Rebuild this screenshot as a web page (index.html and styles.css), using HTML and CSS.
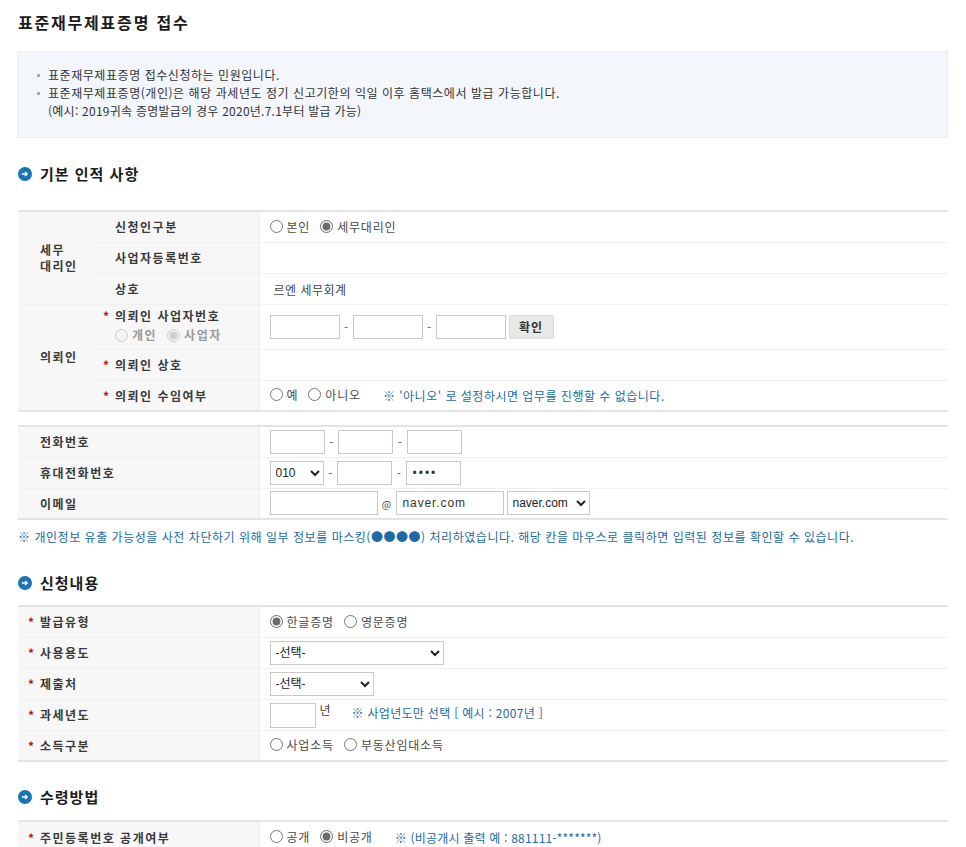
FILE: index.html
```html
<!DOCTYPE html>
<html lang="ko">
<head>
<meta charset="utf-8">
<title>표준재무제표증명 접수</title>
<link rel="stylesheet" href="styles.css">
</head>
<body>
<main class="page">
  <h1 class="title">표준재무제표증명 접수</h1>
  <div class="notice">
    <p class="bullet">표준재무제표증명 접수신청하는 민원입니다.</p>
    <p class="bullet">표준재무제표증명(개인)은 해당 과세년도 정기 신고기한의 익일 이후 홈택스에서 발급 가능합니다.</p>
    <p class="sub">(예시: 2019귀속 증명발급의 경우 2020년.7.1부터 발급 가능)</p>
  </div>

  <h2 class="section first"><svg class="ico" viewBox="0 0 14 14"><circle cx="7" cy="7" r="7" fill="#1a75b5"/><path d="M3.8 7h5.2M7 4.9 9.2 7 7 9.1" fill="none" stroke="#fff" stroke-width="1.4"/></svg>기본 인적 사항</h2>
  <table class="form t1">
    <colgroup><col class="c-group"><col class="c-label"><col></colgroup>
    <tr>
      <th rowspan="3" class="group">세무<br>대리인</th>
      <th class="lab up">신청인구분</th>
      <td><label class="opt"><input type="radio" name="a">본인</label><label class="opt"><input type="radio" name="a" checked>세무대리인</label></td>
    </tr>
    <tr><th class="lab up">사업자등록번호</th><td></td></tr>
    <tr><th class="lab up">상호</th><td class="down"><span class="value">르엔 세무회계</span></td></tr>
    <tr class="split">
      <th rowspan="3" class="group">의뢰인</th>
      <th class="lab tall"><span class="req">*</span>의뢰인 사업자번호
        <div class="kind"><label class="opt dis"><input type="radio" name="k" disabled>개인</label><label class="opt dis"><input type="radio" name="k" checked disabled>사업자</label></div>
      </th>
      <td class="biz"><input class="in w70" type="text"><span class="dash">-</span><input class="in w70" type="text"><span class="dash">-</span><input class="in w70" type="text"><button class="btn" type="button">확인</button></td>
    </tr>
    <tr><th class="lab"><span class="req">*</span>의뢰인 상호</th><td></td></tr>
    <tr><th class="lab"><span class="req">*</span>의뢰인 수임여부</th><td><label class="opt"><input type="radio" name="s">예</label><label class="opt"><input type="radio" name="s">아니오</label><span class="hint h1">※ '아니오' 로 설정하시면 업무를 진행할 수 없습니다.</span></td></tr>
  </table>

  <table class="form t2">
    <colgroup><col class="c-wide"><col></colgroup>
    <tr><th class="lab2">전화번호</th><td><input class="in w55" type="text"><span class="dash sm">-</span><input class="in w55" type="text"><span class="dash sm">-</span><input class="in w55" type="text"></td></tr>
    <tr><th class="lab2">휴대전화번호</th><td><select class="sel w54"><option>010</option></select><span class="dash sm">-</span><input class="in w55" type="text"><span class="dash sm">-</span><input class="in w55 mask" type="password" value="1234"></td></tr>
    <tr><th class="lab2">이메일</th><td><input class="in w108" type="text"><span class="at">@</span><input class="in w108 mail" type="text" value="naver.com"><select class="sel w83"><option>naver.com</option></select></td></tr>
  </table>
  <p class="hint mask-note">※ 개인정보 유출 가능성을 사전 차단하기 위해 일부 정보를 마스킹(●●●●) 처리하였습니다. 해당 칸을 마우스로 클릭하면 입력된 정보를 확인할 수 있습니다.</p>

  <h2 class="section s2"><svg class="ico" viewBox="0 0 14 14"><circle cx="7" cy="7" r="7" fill="#1a75b5"/><path d="M3.8 7h5.2M7 4.9 9.2 7 7 9.1" fill="none" stroke="#fff" stroke-width="1.4"/></svg>신청내용</h2>
  <table class="form t3">
    <colgroup><col class="c-wide"><col></colgroup>
    <tr><th class="lab3"><span class="req">*</span>발급유형</th><td><label class="opt"><input type="radio" name="t" checked>한글증명</label><label class="opt"><input type="radio" name="t">영문증명</label></td></tr>
    <tr><th class="lab3"><span class="req">*</span>사용용도</th><td><select class="sel w174"><option>-선택-</option></select></td></tr>
    <tr><th class="lab3"><span class="req">*</span>제출처</th><td><select class="sel w104"><option>-선택-</option></select></td></tr>
    <tr><th class="lab3"><span class="req">*</span>과세년도</th><td><input class="in w45" type="text"><span class="unit">년</span><span class="hint h2">※ 사업년도만 선택 [ 예시 : 2007년 ]</span></td></tr>
    <tr><th class="lab3"><span class="req">*</span>소득구분</th><td><label class="opt"><input type="radio" name="i">사업소득</label><label class="opt"><input type="radio" name="i">부동산임대소득</label></td></tr>
  </table>

  <h2 class="section s3"><svg class="ico" viewBox="0 0 14 14"><circle cx="7" cy="7" r="7" fill="#1a75b5"/><path d="M3.8 7h5.2M7 4.9 9.2 7 7 9.1" fill="none" stroke="#fff" stroke-width="1.4"/></svg>수령방법</h2>
  <table class="form t4">
    <colgroup><col class="c-wide"><col></colgroup>
    <tr><th class="lab3"><span class="req">*</span>주민등록번호 공개여부</th><td><label class="opt"><input type="radio" name="r">공개</label><label class="opt"><input type="radio" name="r" checked>비공개</label><span class="hint h3">※ (비공개시 출력 예 : 881111-*******)</span></td></tr>
  </table>
</main>
</body>
</html>
```
FILE: styles.css
```css
html, body {
  margin: 0;
  height: 847px;
  overflow: hidden;
  background: #fff;
}
body, input, select, button, table {
  font-family: "Noto Sans CJK KR", "Noto Sans", sans-serif;
  font-size: 12px;
  color: #444;
}
.page {
  padding: 0 18px 0 18px;
}
.title {
  margin: 0;
  padding-top: 12px;
  height: 39px;
  box-sizing: border-box;
  font-size: 16px;
  line-height: 20px;
  font-weight: 700;
  color: #1c1c1c;
  letter-spacing: 1.8px;
}
.notice {
  box-sizing: border-box;
  height: 87px;
  margin: 12px 0 0 -1px;
  padding: 14px 0 0 30px;
  background: #f3f6fb;
  border: 1px solid #e8edf3;
}
.notice p {
  margin: 0;
  line-height: 18px;
  font-size: 12px;
  color: #333;
  letter-spacing: 0.55px;
}
.bullet {
  position: relative;
}
.bullet::before {
  content: "";
  position: absolute;
  left: -11px;
  top: 8px;
  width: 3px;
  height: 3px;
  background: #aaa;
}
.notice .sub {
  letter-spacing: 0.25px;
}
.section {
  display: flex;
  align-items: center;
  gap: 8px;
  margin: 0;
  font-size: 15px;
  line-height: 20px;
  font-weight: 700;
  color: #1c1c1c;
  letter-spacing: 1px;
}
.ico {
  width: 14px;
  height: 14px;
  flex: none;
}
.first { margin-top: 26px; height: 20px; }
.s2 { margin-top: 26px; height: 20px; }
.s3 { margin-top: 25px; height: 20px; }
.form {
  width: 930px;
  table-layout: fixed;
  border-collapse: collapse;
  border-top: 2px solid #e4e4e4;
  border-bottom: 2px solid #e4e4e4;
}
.t1 { margin-top: 26px; }
.t2 { margin-top: 14px; }
.t3 { margin-top: 12px; }
.t4 { margin-top: 13px; border-bottom: 0; }
.c-group { width: 73px; }
.c-label { width: 168px; }
.c-wide { width: 241px; }
.form tr { height: 31px; }
.form th {
  padding: 0;
  background: #f7f7f7;
  text-align: left;
  font-weight: 700;
  color: #3a3a3a;
  letter-spacing: 1.5px;
  border-bottom: 1px solid #f0f0f0;
  border-right: 1px solid #eee;
}
.form td {
  padding: 0 0 0 10px;
  border-bottom: 1px solid #f0f0f0;
  white-space: nowrap;
}
.form tr:last-child th,
.form tr:last-child td { border-bottom: 0; }
.form .group {
  padding-left: 22px;
  line-height: 16px;
  border-right: 0;
  border-bottom: 0;
}
.split .group { border-top: 1px solid #f0f0f0; }
.lab { padding-left: 24px !important; position: relative; }
.lab.up { padding-bottom: 1px; }
.down { padding-top: 2px !important; }
.lab2 { padding-left: 22px !important; }
.lab3 { padding-left: 10px !important; }
.tall { height: 44px; line-height: 16px; }
.req {
  display: inline-block;
  width: 12px;
  margin-left: 0;
  color: #b5141a;
  font-weight: 700;
  letter-spacing: 0;
}
.t1 .req { margin-left: -12px; }
.kind { padding: 3px 0 0 0; }
.opt {
  display: inline-flex;
  align-items: center;
  margin-right: 10px;
  color: #4a4a4a;
  letter-spacing: 0.8px;
}
.opt input {
  width: 13px;
  height: 13px;
  margin: 0 4px 0 0;
  accent-color: #6a6a6a;
}
.dis { color: #999; letter-spacing: 1.5px; }
.value { margin-left: 4px; letter-spacing: 0.5px; }
.in {
  box-sizing: border-box;
  height: 24px;
  padding: 0 5px;
  border: 1px solid #c8c8c8;
  background: #fff;
  vertical-align: middle;
  font-family: "Liberation Sans", sans-serif;
  font-size: 12px;
  color: #333;
  outline: 0;
}
.w70 { width: 70px; }
.w55 { width: 55px; }
.w45 { width: 46px; height: 25px; }
.w108 { width: 108px; }
.mail { letter-spacing: 0.9px; padding-left: 6px; }
.mask { letter-spacing: 2px; padding-left: 6px; }
.dash {
  display: inline-block;
  width: 13px;
  text-align: center;
  vertical-align: middle;
  color: #666;
}
.dash.sm { width: 13.5px; }
.at {
  display: inline-block;
  width: 18px;
  text-align: center;
  font-size: 10px;
  vertical-align: middle;
}
.btn {
  height: 24px;
  width: 45px;
  margin-left: 3px;
  padding: 0;
  border: 1px solid #dcdcdc;
  border-radius: 2px;
  background: #e8e8e8;
  font-weight: 700;
  color: #333;
  letter-spacing: 1px;
  vertical-align: middle;
}
.sel {
  box-sizing: border-box;
  height: 24px;
  padding: 0 0 0 1px;
  border: 1px solid #c8c8c8;
  border-radius: 0;
  background-color: #fff;
  vertical-align: middle;
  font-family: "Liberation Sans", "Noto Sans CJK KR", sans-serif;
  font-size: 12px;
  color: #222;
}
.w54 { width: 54px; }
.w83 { width: 83px; margin-left: 3px; }
.w174 { width: 174px; }
.w104 { width: 104px; }
.hint {
  color: #1c6aa3;
  letter-spacing: 0.5px;
}
.h1 { margin-left: 12px; }
.unit { margin-left: 4px; vertical-align: 3px; }
.h2 { margin-left: 21px; letter-spacing: 0.3px; }
.h3 { margin-left: 12px; letter-spacing: 0.2px; }
.t2 { margin-top: 13px; }
.mask-note {
  margin: 8px 0 0 0;
  line-height: 18px;
  letter-spacing: 0.53px;
}
.s2 { margin-top: 27px; }
```
